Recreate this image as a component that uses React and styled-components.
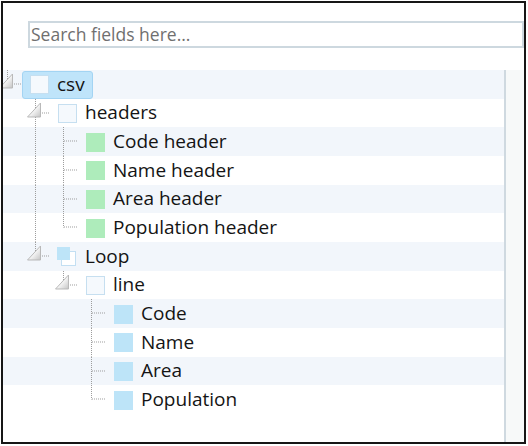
import React from 'react'
import styled, { createGlobalStyle } from 'styled-components'

const ROW_H = 28.67

const rows = [
  { label: 'csv', level: 0, box: 'empty', toggle: true, last: true, selected: true, guides: [] },
  { label: 'headers', level: 1, box: 'empty', toggle: true, last: false, guides: [false] },
  { label: 'Code header', level: 2, box: 'green', last: false, guides: [false, true] },
  { label: 'Name header', level: 2, box: 'green', last: false, guides: [false, true] },
  { label: 'Area header', level: 2, box: 'green', last: false, guides: [false, true] },
  { label: 'Population header', level: 2, box: 'green', last: true, guides: [false, true] },
  { label: 'Loop', level: 1, box: 'loop', toggle: true, last: true, guides: [false] },
  { label: 'line', level: 2, box: 'empty', toggle: true, last: true, guides: [false, false] },
  { label: 'Code', level: 3, box: 'blue', last: false, guides: [false, false, false] },
  { label: 'Name', level: 3, box: 'blue', last: false, guides: [false, false, false] },
  { label: 'Area', level: 3, box: 'blue', last: false, guides: [false, false, false] },
  { label: 'Population', level: 3, box: 'blue', last: true, guides: [false, false, false] },
]

const GlobalStyle = createGlobalStyle`
  html, body {
    margin: 0;
    padding: 0;
    background: #ffffff;
  }
  body {
    font-family: "Open Sans", "Noto Sans", sans-serif;
  }
`

const Guide = ({ on }) => (
  <GuideCell>
    {on && (
      <svg width='28' height={ROW_H} viewBox={`0 0 28 ${ROW_H}`}>
        <line x1='8.5' y1='0' x2='8.5' y2={ROW_H} stroke='#9c9c9c' strokeDasharray='1 1' />
      </svg>
    )}
  </GuideCell>
)

const Expander = ({ toggle, last }) => {
  const c = 14.5
  return (
    <ExpanderCell>
      <svg width='23' height={ROW_H} viewBox={`0 0 23 ${ROW_H}`}>
        <defs>
          <linearGradient id='tri' x1='0' y1='0' x2='1' y2='1'>
            <stop offset='0' stopColor='#ffffff' />
            <stop offset='0.55' stopColor='#f2f2f2' />
            <stop offset='1' stopColor='#c4c4c4' />
          </linearGradient>
        </defs>
        <line x1='8.5' y1='0' x2='8.5' y2={last ? c : ROW_H} stroke='#9c9c9c' strokeDasharray='1 1' />
        <line x1='9' y1={c - 0.5} x2='23' y2={c - 0.5} stroke='#9c9c9c' strokeDasharray='1 1' />
        {toggle && (
          <path
            d={`M13.5 ${c - 10.5} L13.5 ${c + 3.5} L0.5 ${c + 3.5} Z`}
            fill='url(#tri)'
            stroke='#b9b9b9'
            strokeLinejoin='round'
          />
        )}
      </svg>
    </ExpanderCell>
  )
}

const BoxIcon = ({ kind }) => {
  if (kind === 'loop') {
    return (
      <IconSlot>
        <svg width='20' height='20' viewBox='0 0 20 20'>
          <rect x='4.5' y='4.5' width='14' height='14' fill='#ffffff' stroke='#c3dff2' />
          <rect x='0' y='0' width='13' height='13' fill='#bde4f8' />
        </svg>
      </IconSlot>
    )
  }
  return (
    <IconSlot>
      <Square kind={kind} />
    </IconSlot>
  )
}

const App = () => {
  return (
    <>
      <GlobalStyle />
      <Frame>
        <SearchBar>
          <SearchInput type='text' placeholder='Search fields here...' />
        </SearchBar>
        <Body>
          <TreePane>
            {rows.map((r, i) => (
              <Row key={i} striped={i % 2 === 0}>
                <Indent>
                  {r.guides.map((g, j) => (
                    <Guide key={j} on={g} />
                  ))}
                </Indent>
                <Expander toggle={r.toggle} last={r.last} />
                <Node selected={r.selected}>
                  <BoxIcon kind={r.box} />
                  <Label>{r.label}</Label>
                </Node>
              </Row>
            ))}
          </TreePane>
          <ScrollTrack />
        </Body>
      </Frame>
    </>
  )
}

const Frame = styled.div`
  box-sizing: border-box;
  margin: 1px;
  width: 525px;
  height: 443px;
  border: 2px solid #161616;
  display: flex;
  flex-direction: column;
  background: #ffffff;
  overflow: hidden;
`

const SearchBar = styled.div`
  box-sizing: border-box;
  height: 67px;
  padding: 18px 0 0 25px;
  flex-shrink: 0;
`

const SearchInput = styled.input`
  box-sizing: border-box;
  display: block;
  width: 496px;
  height: 27px;
  margin: 0;
  padding: 0 0 1px 1px;
  border: 2px solid #cdd8df;
  border-radius: 0;
  outline: none;
  font-family: "Open Sans", "Noto Sans", sans-serif;
  font-size: 17.5px;
  color: #333;

  &::placeholder {
    color: #6f6f6f;
  }
`

const Body = styled.div`
  flex: 1;
  display: flex;
  min-height: 0;
`

const TreePane = styled.div`
  flex: 1;
  overflow: hidden;
`

const ScrollTrack = styled.div`
  width: 18px;
  border-left: 2px solid #cfd9e0;
  background: #f7f9f9;
`

const Row = styled.div`
  display: flex;
  align-items: stretch;
  height: ${ROW_H}px;
  margin-left: -4px;
  background: ${(p) => (p.striped ? '#f2f6fb' : '#ffffff')};
`

const Indent = styled.div`
  display: flex;
  flex-shrink: 0;
`

const GuideCell = styled.div`
  width: 28px;
  height: 100%;
  flex-shrink: 0;

  svg {
    display: block;
  }
`

const ExpanderCell = styled.div`
  width: 23px;
  height: 100%;
  flex-shrink: 0;

  svg {
    display: block;
  }
`

const Node = styled.div`
  box-sizing: border-box;
  display: flex;
  align-items: center;
  gap: 8px;
  margin-top: 1px;
  padding: 0 7px 0 6px;
  border: 1px solid ${(p) => (p.selected ? '#a3d4f3' : 'transparent')};
  border-radius: 3px;
  background: ${(p) => (p.selected ? '#bfe4fa' : 'transparent')};
`

const IconSlot = styled.span`
  display: flex;
  width: 20px;
  height: 20px;
  align-items: center;
  justify-content: center;
  flex-shrink: 0;

  svg {
    display: block;
  }
`

const Square = styled.span`
  box-sizing: border-box;
  display: block;
  width: 19px;
  height: 19px;
  background: ${(p) =>
    p.kind === 'green' ? '#aeecbb' : p.kind === 'blue' ? '#bde4f8' : '#f5f9fd'};
  border: ${(p) => (p.kind === 'empty' ? '1px solid #c6dff0' : 'none')};
`

const Label = styled.span`
  font-size: 19px;
  line-height: 1;
  color: #141414;
  white-space: nowrap;
  margin-top: -1px;
`

export default App
